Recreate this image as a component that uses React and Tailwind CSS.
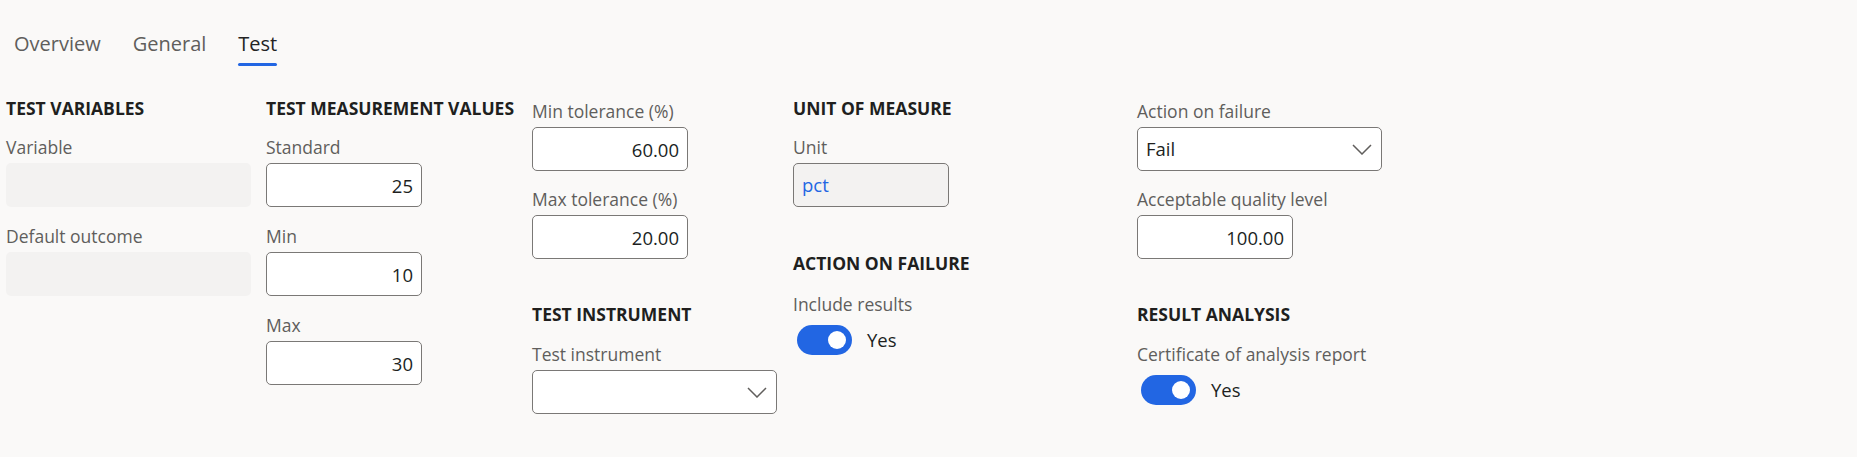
import { useState } from 'react'

const tabs = ['Overview', 'General', 'Test']

function Heading({ children, className = '' }) {
  return (
    <h3 className={`text-[17.5px] leading-6 font-bold text-[#201f1e] tracking-normal whitespace-nowrap ${className}`}>
      {children}
    </h3>
  )
}

function Field({ label, className = '', children }) {
  return (
    <div className={`flex flex-col ${className}`}>
      <label className="text-[17.5px] leading-6 text-[#605e5c] mb-1 whitespace-nowrap">{label}</label>
      {children}
    </div>
  )
}

function NumberInput({ value, wide }) {
  return (
    <input
      readOnly
      value={value}
      className={`h-11 ${wide ? 'w-[245px]' : 'w-[156px]'} px-2 text-right text-[18.5px] text-[#201f1e] bg-white border border-[#7a7876] rounded-[5px] outline-none`}
    />
  )
}

function Disabled() {
  return <div className="h-11 w-[245px] bg-[#f3f2f1] rounded-[5px]" />
}

function Chevron() {
  return (
    <svg width="20" height="11" viewBox="0 0 20 11" fill="none" className="shrink-0">
      <path d="M1 1l9 9 9-9" stroke="#605e5c" strokeWidth="1.5" />
    </svg>
  )
}

function Select({ value }) {
  return (
    <div className="h-11 w-[245px] flex items-center justify-between pl-2 pr-[9px] bg-white border border-[#7a7876] rounded-[5px]">
      <span className="text-[18.5px] text-[#201f1e]">{value}</span>
      <Chevron />
    </div>
  )
}

function Toggle({ on, setOn }) {
  return (
    <div className="flex items-center gap-[15px] ml-1 mt-[9px]">
      <button
        onClick={() => setOn(!on)}
        className={`h-[30px] w-[55px] rounded-full flex items-center px-[6px] ${on ? 'bg-[#2266e3] justify-end' : 'bg-white border border-[#605e5c] justify-start'}`}
      >
        <span className={`block h-[18px] w-[18px] rounded-full ${on ? 'bg-white' : 'bg-[#605e5c]'}`} />
      </button>
      <span className="text-[18.5px] text-[#201f1e]">{on ? 'Yes' : 'No'}</span>
    </div>
  )
}

export default function App() {
  const [active, setActive] = useState('Test')
  const [include, setInclude] = useState(true)
  const [certificate, setCertificate] = useState(true)

  return (
    <div className="min-h-screen bg-[#faf9f8] font-['Open_Sans',sans-serif] px-[6px] pt-[30px]">
      <div className="flex gap-4">
        {tabs.map(t => (
          <button key={t} onClick={() => setActive(t)} className="flex flex-col px-2">
            <span className={`text-[20px] leading-7 ${active === t ? 'text-[#242424]' : 'text-[#605e5c]'}`}>{t}</span>
            <span className={`mt-[5px] h-[3px] w-full rounded-full ${active === t ? 'bg-[#2266e3]' : 'bg-transparent'}`} />
          </button>
        ))}
      </div>

      <div className="grid grid-cols-[260px_266px_261px_344px_1fr] mt-[30px]">
        <div className="flex flex-col">
          <Heading>TEST VARIABLES</Heading>
          <Field label="Variable" className="mt-[15px]"><Disabled /></Field>
          <Field label="Default outcome" className="mt-[17px]"><Disabled /></Field>
        </div>

        <div className="flex flex-col">
          <Heading>TEST MEASUREMENT VALUES</Heading>
          <Field label="Standard" className="mt-[15px]"><NumberInput value="25" /></Field>
          <Field label="Min" className="mt-[17px]"><NumberInput value="10" /></Field>
          <Field label="Max" className="mt-[17px]"><NumberInput value="30" /></Field>
        </div>

        <div className="flex flex-col pt-[3px]">
          <Field label="Min tolerance (%)"><NumberInput value="60.00" /></Field>
          <Field label="Max tolerance (%)" className="mt-[16px]"><NumberInput value="20.00" /></Field>
          <Heading className="mt-[43px]">TEST INSTRUMENT</Heading>
          <Field label="Test instrument" className="mt-[16px]"><Select value="" /></Field>
        </div>

        <div className="flex flex-col">
          <Heading>UNIT OF MEASURE</Heading>
          <Field label="Unit" className="mt-[15px]">
            <div className="h-11 w-[156px] flex items-center px-2 bg-[#f3f2f1] border border-[#7a7876] rounded-[5px]">
              <span className="text-[18.5px] text-[#2266e3]">pct</span>
            </div>
          </Field>
          <Heading className="mt-[44px]">ACTION ON FAILURE</Heading>
          <label className="mt-[17px] text-[17.5px] leading-6 text-[#605e5c]">Include results</label>
          <Toggle on={include} setOn={setInclude} />
        </div>

        <div className="flex flex-col pt-[3px]">
          <Field label="Action on failure"><Select value="Fail" /></Field>
          <Field label="Acceptable quality level" className="mt-[16px]"><NumberInput value="100.00" /></Field>
          <Heading className="mt-[43px]">RESULT ANALYSIS</Heading>
          <label className="mt-[16px] text-[17.5px] leading-6 text-[#605e5c]">Certificate of analysis report</label>
          <Toggle on={certificate} setOn={setCertificate} />
        </div>
      </div>
    </div>
  )
}
